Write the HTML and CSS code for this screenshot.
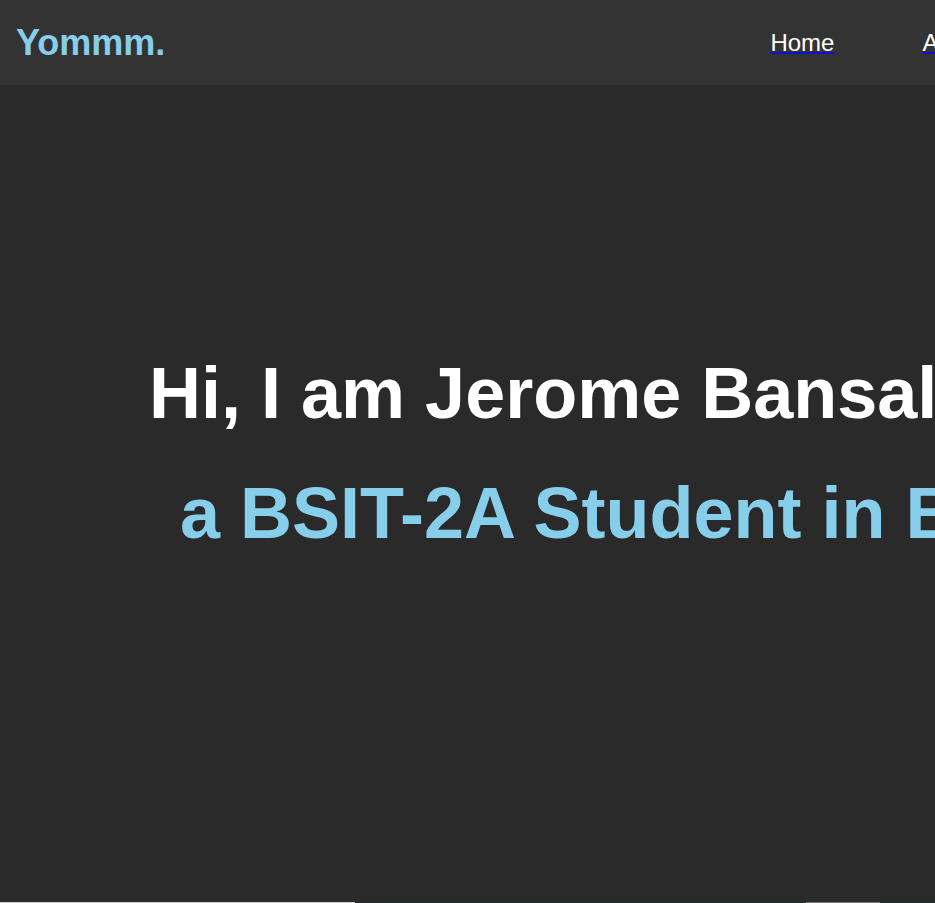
FILE: index.html
```html
<!DOCTYPE html>
<html lang="en">
<head>
<meta charset="utf-8">
<title>Yommm.</title>
<link rel="stylesheet" href="styles.css">
</head>
<body>
<header class="site-header">
  <a class="logo" href="#">Yommm.</a>
  <nav class="nav">
    <a class="nav-link" href="#"><span>Home</span></a>
    <a class="nav-link" href="#"><span>About</span></a>
    <a class="nav-link" href="#"><span>Projects</span></a>
    <a class="nav-link" href="#"><span>Contact</span></a>
  </nav>
</header>
<main class="hero">
  <h1 class="hero-title">Hi, I am Jerome Bansales</h1>
  <h2 class="hero-sub">a BSIT-2A Student in BSU</h2>
</main>
<section class="next">
  <div class="next-a"></div>
  <div class="next-b"></div>
  <div class="next-c"></div>
  <div class="next-d"></div>
</section>
</body>
</html>
```
FILE: styles.css
```css
html, body {
  margin: 0;
  padding: 0;
}
body {
  background: #2a2a2a;
  font-family: "Liberation Sans", Arial, sans-serif;
  overflow: hidden;
  width: 935px;
  height: 903px;
}
.site-header {
  height: 85px;
  background: #333333;
  display: flex;
  align-items: center;
  padding-left: 16px;
  white-space: nowrap;
  overflow: hidden;
}
.logo {
  color: #87ceeb;
  font-weight: bold;
  font-size: 36px;
  text-decoration: none;
  flex: none;
}
.nav {
  display: flex;
  gap: 88px;
  margin-left: 605px;
  flex: none;
}
.nav-link {
  color: #0000ee;
  font-size: 24px;
  text-decoration: underline;
  text-decoration-color: #1010d0;
  text-decoration-thickness: 2px;
}
.nav-link span {
  color: #ffffff;
}
.hero {
  height: 817px;
  box-sizing: border-box;
  padding-top: 267px;
  white-space: nowrap;
  overflow: hidden;
}
.hero-title {
  margin: 0;
  padding-left: 149px;
  color: #ffffff;
  font-size: 72px;
  font-weight: bold;
  line-height: 83px;
}
.hero-sub {
  margin: 37px 0 0 0;
  padding-left: 180px;
  color: #87ceeb;
  font-size: 72px;
  font-weight: bold;
  line-height: 83px;
}
.next {
  display: flex;
  height: 1px;
}
.next-a { width: 355px; background: #d0d0d0; }
.next-b { width: 451px; background: #1e2a30; }
.next-c { width: 74px; background: #7a7a7a; }
.next-d { flex: 1; background: #1e2a30; }
```
